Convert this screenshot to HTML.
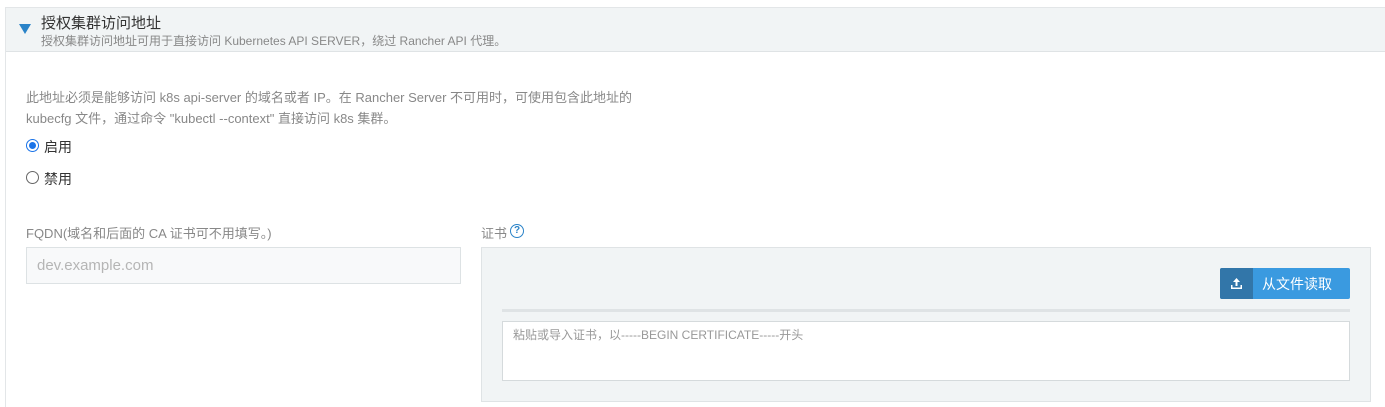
<!DOCTYPE html>
<html><head><meta charset="utf-8"><style>
*{box-sizing:border-box;margin:0;padding:0}
body{width:1385px;height:405px;overflow:hidden;background:#fff;font-family:"Liberation Sans","Noto Sans CJK SC",sans-serif;position:relative}
.a{position:absolute;white-space:nowrap}
.g{color:#888;font-size:13px}
</style></head><body>
<div class="a" style="left:5px;top:7px;width:1385px;height:400px;border-left:1px solid #e3e6e8;border-top:1px solid #e3e6e8"></div>
<div class="a" style="left:6px;top:8px;width:1379px;height:44px;background:#f1f4f5;border-bottom:1px solid #dfe3e5"></div>
<div class="a" style="left:19px;top:24px;width:0;height:0;border-left:6px solid transparent;border-right:6px solid transparent;border-top:10px solid #2a83c8"></div>
<div class="a" style="left:41px;top:12px;font-size:15px;color:#333">授权集群访问地址</div>
<div class="a" style="left:41px;top:32px;font-size:12px;color:#888">授权集群访问地址可用于直接访问 Kubernetes API SERVER，绕过 Rancher API 代理。</div>
<div class="a g" style="left:26px;top:87px;line-height:21px">此地址必须是能够访问 k8s api-server 的域名或者 IP。在 Rancher Server 不可用时，可使用包含此地址的<br>kubecfg 文件，通过命令 "kubectl --context" 直接访问 k8s 集群。</div>
<div class="a" style="left:26px;top:139px;width:13px;height:13px;border-radius:50%;border:1px solid #1a73e8;background:#fff"><div style="margin:2px;width:7px;height:7px;border-radius:50%;background:#1a73e8"></div></div>
<div class="a" style="left:44px;top:137px;font-size:14px;color:#333">启用</div>
<div class="a" style="left:26px;top:171px;width:13px;height:13px;border-radius:50%;border:1px solid #666;background:#fff"></div>
<div class="a" style="left:44px;top:169px;font-size:14px;color:#333">禁用</div>
<div class="a g" style="left:26px;top:223px">FQDN(域名和后面的 CA 证书可不用填写。)</div>
<div class="a" style="left:26px;top:247px;width:435px;height:37px;border:1px solid #dde2e4;background:#f8f9fa;padding:9px 10px;font-size:15px;color:#b5b5b5">dev.example.com</div>
<div class="a g" style="left:481px;top:223px">证书</div>
<div class="a" style="left:510px;top:224px;width:14px;height:14px;border-radius:50%;border:1.5px solid #2a83c8;color:#2a83c8;font-size:10px;font-weight:bold;text-align:center;line-height:11px">?</div>
<div class="a" style="left:481px;top:247px;width:890px;height:155px;background:#f1f4f5;border:1px solid #dfe3e5"></div>
<div class="a" style="left:1220px;top:268px;width:130px;height:31px;background:#3a9ae0;border-radius:2px;overflow:hidden">
<div style="position:absolute;left:0;top:0;width:33px;height:31px;background:#3276a9"></div>
<svg style="position:absolute;left:10px;top:9px" width="13" height="13" viewBox="0 0 13 13"><path d="M6.5 1L3 5h2.5v4h2V5H10z M1 8v4h11V8h-1.5v2.5h-8V8z" fill="#fff"/></svg>
<div style="position:absolute;left:42px;top:6px;color:#fff;font-size:14px">从文件读取</div></div>
<div class="a" style="left:502px;top:309px;width:848px;height:3px;background:#dfe3e5"></div>
<div class="a" style="left:502px;top:321px;width:848px;height:60px;background:#fff;border:1px solid #d5dadc;padding:4px 10px;font-size:12px;color:#999">粘贴或导入证书，以-----BEGIN CERTIFICATE-----开头</div>
</body></html>
